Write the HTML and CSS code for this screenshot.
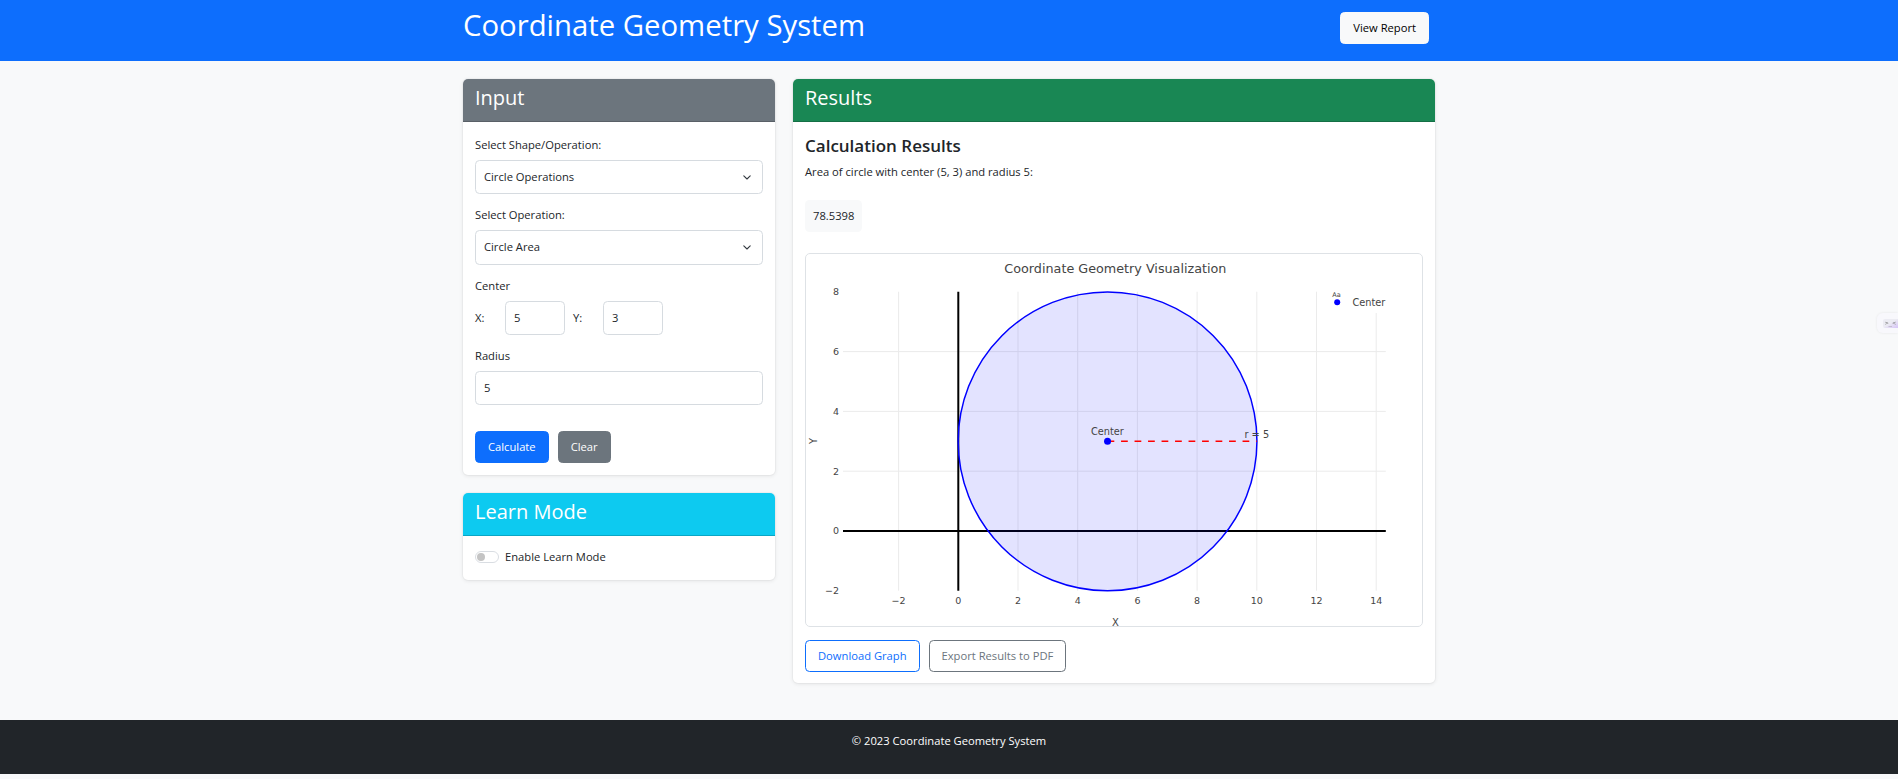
FILE: index.html
```html
<!DOCTYPE html>
<html lang="en">
<head>
<meta charset="utf-8">
<title>Coordinate Geometry System</title>
<link rel="stylesheet" href="styles.css">
</head>
<body>
<header class="topbar">
  <div class="topbar-inner">
    <h1 class="brand">Coordinate Geometry System</h1>
    <button class="btn btn-light btn-view" type="button">View Report</button>
  </div>
</header>

<main class="container">
  <div class="layout">
    <div class="col-left">
      <section class="card">
        <div class="card-header hdr-secondary"><h3 class="card-title">Input</h3></div>
        <div class="card-body input-body">
          <div class="field">
            <label class="label">Select Shape/Operation:</label>
            <div class="select-wrap">
              <select class="control select"><option>Circle Operations</option></select>
              <svg class="chevron" width="8" height="5" viewBox="0 0 8 5"><path d="M0.8 0.9 L4 4 L7.2 0.9" fill="none" stroke="#343a40" stroke-width="1.1" stroke-linecap="round" stroke-linejoin="round"/></svg>
            </div>
          </div>
          <div class="field">
            <label class="label">Select Operation:</label>
            <div class="select-wrap">
              <select class="control select"><option>Circle Area</option></select>
              <svg class="chevron" width="8" height="5" viewBox="0 0 8 5"><path d="M0.8 0.9 L4 4 L7.2 0.9" fill="none" stroke="#343a40" stroke-width="1.1" stroke-linecap="round" stroke-linejoin="round"/></svg>
            </div>
          </div>
          <div class="field">
            <label class="label">Center</label>
            <div class="xy-row">
              <span class="xy-label">X:</span>
              <input class="control xy-input" type="text" value="5">
              <span class="xy-label xy-gap">Y:</span>
              <input class="control xy-input" type="text" value="3">
            </div>
          </div>
          <div class="field">
            <label class="label">Radius</label>
            <input class="control" type="text" value="5">
          </div>
          <div class="actions form-actions">
            <button class="btn btn-primary" type="button">Calculate</button>
            <button class="btn btn-secondary" type="button">Clear</button>
          </div>
        </div>
      </section>

      <section class="card">
        <div class="card-header hdr-info"><h3 class="card-title">Learn Mode</h3></div>
        <div class="card-body learn-body">
          <div class="check">
            <svg class="switch" width="24" height="12" viewBox="0 0 24 12"><rect x="0.5" y="0.5" width="23" height="11" rx="5.5" fill="#fff" stroke="#d9dde2"/><circle cx="6" cy="6" r="4" fill="#c4c4c4"/></svg>
            <span>Enable Learn Mode</span>
          </div>
        </div>
      </section>
    </div>

    <section class="card">
      <div class="card-header hdr-success"><h3 class="card-title">Results</h3></div>
      <div class="card-body results-body">
        <h4 class="res-title">Calculation Results</h4>
        <p class="res-text">Area of circle with center (5, 3) and radius 5:</p>
        <div class="res-value">78.5398</div>
        <div class="graph">
          <svg class="plot" width="615" height="372" viewBox="0 0 615 372">
            <text class="p-title" x="309.4" y="19.3" text-anchor="middle">Coordinate Geometry Visualization</text>
            <g stroke="#ebebeb" stroke-width="1">
              <line x1="92.6" y1="37.7" x2="92.6" y2="336.7"/>
              <line x1="212" y1="37.7" x2="212" y2="336.7"/>
              <line x1="271.7" y1="37.7" x2="271.7" y2="336.7"/>
              <line x1="331.4" y1="37.7" x2="331.4" y2="336.7"/>
              <line x1="391.1" y1="37.7" x2="391.1" y2="336.7"/>
              <line x1="450.8" y1="37.7" x2="450.8" y2="336.7"/>
              <line x1="510.5" y1="37.7" x2="510.5" y2="336.7"/>
              <line x1="570.2" y1="59" x2="570.2" y2="336.7"/>
              <line x1="37" y1="97.6" x2="579.8" y2="97.6"/>
              <line x1="37" y1="157.4" x2="579.8" y2="157.4"/>
              <line x1="37" y1="217.2" x2="579.8" y2="217.2"/>
            </g>
            <line x1="37" y1="277" x2="579.8" y2="277" stroke="#000" stroke-width="2"/>
            <line x1="152.3" y1="37.7" x2="152.3" y2="336.7" stroke="#000" stroke-width="2"/>
            <circle cx="301.55" cy="187.3" r="149.4" fill="rgba(0,0,255,0.11)" stroke="#0000ff" stroke-width="1.5"/>
            <path d="M301.55 187.3 H450.8" stroke="#ff0000" stroke-width="1.5" stroke-dasharray="6.75 6.75"/>
            <circle cx="301.55" cy="187.3" r="3.5" fill="#0000ff"/>
            <text class="p-txt" x="301.4" y="181" text-anchor="middle">Center</text>
            <text class="p-txt" x="450.8" y="184.3" text-anchor="middle">r = 5</text>
            <g class="p-tick" text-anchor="middle">
              <text x="92.6" y="350">−2</text>
              <text x="152.3" y="350">0</text>
              <text x="212" y="350">2</text>
              <text x="271.7" y="350">4</text>
              <text x="331.4" y="350">6</text>
              <text x="391.1" y="350">8</text>
              <text x="450.8" y="350">10</text>
              <text x="510.5" y="350">12</text>
              <text x="570.2" y="350">14</text>
            </g>
            <g class="p-tick" text-anchor="end">
              <text x="33" y="41.2">8</text>
              <text x="33" y="101">6</text>
              <text x="33" y="160.8">4</text>
              <text x="33" y="220.6">2</text>
              <text x="33" y="280.4">0</text>
              <text x="33" y="340.2">−2</text>
            </g>
            <text class="p-axis" x="309.4" y="371.5" text-anchor="middle">X</text>
            <text class="p-axis" transform="translate(10.5 187) rotate(-90)" text-anchor="middle">Y</text>
            <text class="p-aa" x="526.3" y="42.5">Aa</text>
            <circle cx="531.2" cy="48.3" r="3" fill="#0000ff"/>
            <text class="p-txt" x="546.4" y="52">Center</text>
          </svg>
        </div>
        <div class="actions res-actions">
          <button class="btn btn-outline-primary" type="button">Download Graph</button>
          <button class="btn btn-outline-secondary" type="button">Export Results to PDF</button>
        </div>
      </div>
    </section>
  </div>
</main>

<footer class="footer">
  <p>© 2023 Coordinate Geometry System</p>
</footer>

<div class="side-widget"><div class="side-icon">&gt;_&lt;</div></div>
</body>
</html>
```

FILE: styles.css
```css
* { box-sizing: border-box; }

html, body { margin: 0; padding: 0; }

body {
  background: #f8f9fa;
  color: #212529;
  font-family: "Open Sans", "Noto Sans", sans-serif;
  font-size: 11.2px;
  line-height: 18px;
}

/* top bar */
.topbar {
  background: #0d6efd;
  height: 61px;
}
.topbar-inner {
  width: 972px;
  margin: 0 auto;
  display: flex;
  justify-content: space-between;
  align-items: flex-start;
}
.brand {
  margin: 7px 0 0;
  color: #fff;
  font-size: 29.3px;
  font-weight: 400;
  line-height: 36px;
}
.btn-view { margin-top: 12px; margin-right: 6px; }

/* buttons */
.btn {
  display: inline-flex;
  align-items: center;
  justify-content: center;
  height: 32px;
  padding: 0 12px;
  border: 1px solid transparent;
  border-radius: 4.5px;
  font-family: inherit;
  font-size: 11.2px;
  font-weight: 400;
  line-height: 18px;
  cursor: pointer;
  background: transparent;
}
.btn-light { background: #f8f9fa; border-color: #f8f9fa; color: #000; }
.btn-primary { background: #0d6efd; border-color: #0d6efd; color: #fff; }
.btn-secondary { background: #6c757d; border-color: #6c757d; color: #fff; }
.btn-outline-primary { border-color: #0d6efd; color: #0d6efd; background: #fff; }
.btn-outline-secondary { border-color: #6c757d; color: #6c757d; background: #fff; }

/* layout */
.container {
  width: 972px;
  margin: 0 auto;
  padding: 18px 0 19px;
}
.layout {
  display: grid;
  grid-template-columns: 312px 1fr;
  column-gap: 18px;
  align-items: start;
}

/* cards */
.card {
  background: #fff;
  border-radius: 5px;
  box-shadow: 0 1px 4px rgba(0, 0, 0, 0.09), 0 0 0 1px rgba(0, 0, 0, 0.025);
  margin-bottom: 18px;
  overflow: hidden;
}
.card-header {
  padding: 6px 12px;
  border-bottom: 1px solid rgba(0, 0, 0, 0.175);
  color: #fff;
}
.hdr-secondary { background: #6c757d; }
.hdr-success { background: #198754; }
.hdr-info { background: #0dcaf0; }
.card-title {
  margin: 0 0 5px;
  font-size: 20px;
  font-weight: 400;
  line-height: 25px;
}
.card-body { padding: 12px; }

/* input form */
.input-body { padding: 13.5px 12px 11.5px; }
.field { margin-bottom: 12px; }
.label {
  display: block;
  margin-bottom: 6px;
}
.control {
  display: block;
  width: 100%;
  height: 34.5px;
  padding: 0 8px;
  border: 1px solid #d6dbe0;
  border-radius: 4.5px;
  background: #fff;
  color: #212529;
  font-family: inherit;
  font-size: 11.2px;
  line-height: 18px;
  outline: none;
}
.select-wrap { position: relative; }
.select {
  appearance: none;
  -webkit-appearance: none;
  padding-right: 30px;
}
.chevron {
  position: absolute;
  right: 12.5px;
  top: 15px;
  pointer-events: none;
}
.xy-row {
  display: flex;
  align-items: center;
}
.xy-label { width: 30px; flex: none; }
.xy-gap { margin-left: 8px; }
.xy-input { width: 60px; height: 34px; flex: none; }
.actions {
  display: flex;
  gap: 9px;
}
.form-actions { margin-top: 26px; }

/* learn mode */
.learn-body { padding: 12px 12px 14px; }
.check {
  display: flex;
  align-items: center;
  gap: 6px;
}
.switch { display: block; flex: none; margin-top: 1px; }

/* results */
.results-body { padding: 12px 12px 11px; }
.res-title {
  margin: 1px 0 6px;
  font-size: 17px;
  font-weight: 600;
  line-height: 21.6px;
}
.res-text { margin: 0 0 19.5px; }
.res-value {
  display: inline-block;
  padding: 7px 8px;
  background: #f8f9fa;
  border-radius: 4.5px;
  margin-bottom: 21px;
}
.graph {
  height: 374px;
  border: 1px solid #dee2e6;
  border-radius: 5px;
  overflow: hidden;
  background: #fff;
}
.plot { display: block; }
.plot text { font-family: "DejaVu Sans", Verdana, sans-serif; fill: #444; }
.p-title { font-size: 12.75px; }
.p-txt { font-size: 9.75px; }
.p-tick { font-size: 9.5px; }
.p-axis { font-size: 10px; }
.p-aa { font-size: 6.5px; }
.res-actions { margin-top: 13px; }

/* footer */
.footer {
  background: #212529;
  color: #fff;
  text-align: center;
  padding: 12px 0 12px;
}
.footer p { margin: 0 0 12px; }

/* floating side widget */
.side-widget {
  position: fixed;
  top: 313px;
  right: 0;
  width: 21px;
  height: 20px;
  background: #f8f8fc;
  border-radius: 6px 0 0 6px;
  box-shadow: 0 0 3px rgba(0, 0, 0, 0.08);
  padding: 6px 0 0 6px;
}
.side-icon {
  height: 9px;
  border-radius: 2px 0 0 2px;
  background: linear-gradient(150deg, #ececf3 45%, #d6c3f7);
  color: #666;
  font-family: "DejaVu Sans Mono", monospace;
  font-size: 6px;
  line-height: 8px;
  padding-left: 2px;
  white-space: nowrap;
  overflow: hidden;
}
```
